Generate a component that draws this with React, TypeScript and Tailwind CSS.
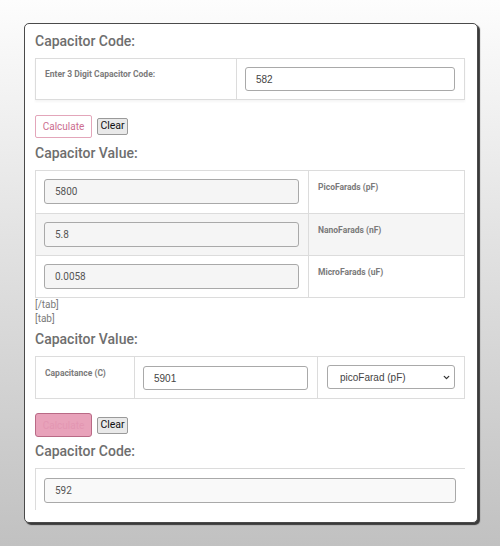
import { ChevronDown } from "lucide-react";

const label = "block text-[8.5px] font-bold text-[#7a7a7a] leading-[12px]";
const heading =
  "text-[14px] font-medium leading-[24px] text-[#6e6e6e] font-['Roboto',sans-serif]";
const readonlyInput =
  "h-[25px] w-full rounded-[3px] border border-[#a9a9a9] bg-[#f5f5f5] pl-[10px] flex items-center text-[10px] text-[#555]";

function ClearButton() {
  return (
    <button className="h-[17px] w-[31px] rounded-[2px] border border-[#9a9a9a] bg-[#e9e9e9] text-[10.5px] text-[#111] leading-none">
      Clear
    </button>
  );
}

export default function App() {
  return (
    <div className="h-[546px] w-[500px] overflow-hidden bg-gradient-to-b from-[#fdfdfd] to-[#c1c1c1] pl-[24px] pt-[23px] font-['Roboto',sans-serif]">
      <div className="h-[500px] w-[454px] overflow-hidden rounded-[5px] border border-[#4a4a4a] bg-white pl-[10px] pt-[5px] shadow-[2px_2px_1px_#3a3a3a]">
        {/* Code to value */}
        <h2 className={heading}>Capacitor Code:</h2>
        <div className="mt-[5px] flex h-[42px] w-[430px] border border-[#dcdcdc] shadow-[0_2px_2px_rgba(0,0,0,0.04)]">
          <div className="w-[201px] border-r border-[#dcdcdc] pl-[9px] pt-[9px]">
            <span className={label}>Enter 3 Digit Capacitor Code:</span>
          </div>
          <div className="flex-1 pl-[8px] pr-[9px] pt-[8px]">
            <div className="flex h-[24px] items-center rounded-[3px] border border-[#a9a9a9] bg-white pl-[10px] font-['Liberation_Sans',sans-serif] text-[10px] text-[#444]">
              582
            </div>
          </div>
        </div>

        <div className="mt-[15px] flex items-center gap-[5px]">
          <button className="h-[23px] w-[57px] rounded-[2px] border border-[#e3a6ba] bg-white text-[10px] text-[#cc6d90]">
            Calculate
          </button>
          <ClearButton />
        </div>

        <h2 className={`${heading} mt-[3px]`}>Capacitor Value:</h2>
        <div className="mt-[5px] w-[430px] border border-[#dcdcdc]">
          {[
            { v: "5800", u: "PicoFarads (pF)", bg: "bg-white" },
            { v: "5.8", u: "NanoFarads (nF)", bg: "bg-[#f5f5f5]" },
            { v: "0.0058", u: "MicroFarads (uF)", bg: "bg-white" },
          ].map((row, i) => (
            <div
              key={row.u}
              className={`flex h-[42px] ${row.bg} ${i > 0 ? "border-t border-[#dcdcdc]" : ""}`}
            >
              <div className="w-[273px] border-r border-[#dcdcdc] pl-[8px] pr-[9px] pt-[8px]">
                <div className={readonlyInput}>{row.v}</div>
              </div>
              <div className="pl-[9px] pt-[10px]">
                <span className={label}>{row.u}</span>
              </div>
            </div>
          ))}
        </div>
        <p className="text-[10px] leading-[14px] text-[#7a7a7a]">[/tab]</p>
        <p className="text-[10px] leading-[14px] text-[#7a7a7a]">[tab]</p>

        {/* Value to code */}
        <h2 className={`${heading} mt-[1px]`}>Capacitor Value:</h2>
        <div className="mt-[5px] flex h-[43px] w-[430px] border border-[#dcdcdc]">
          <div className="w-[99px] border-r border-[#dcdcdc] pl-[9px] pt-[10px]">
            <span className={label}>Capacitance (C)</span>
          </div>
          <div className="w-[183px] border-r border-[#dcdcdc] pl-[8px] pr-[9px] pt-[9px]">
            <div className="flex h-[24px] items-center rounded-[3px] border border-[#a9a9a9] bg-white pl-[10px] font-['Liberation_Sans',sans-serif] text-[10px] text-[#444]">
              5901
            </div>
          </div>
          <div className="flex-1 pl-[9px] pr-[9px] pt-[8px]">
            <div className="flex h-[24px] items-center justify-between rounded-[3px] border border-[#a9a9a9] bg-white pl-[12px] pr-[3px] font-['Liberation_Sans',sans-serif] text-[10px] text-[#444]">
              picoFarad (pF)
              <ChevronDown size={9} strokeWidth={3.5} className="text-[#333]" />
            </div>
          </div>
        </div>

        <div className="mt-[14px] flex items-center gap-[5px]">
          <button className="h-[24px] w-[57px] rounded-[3px] border border-[#b96a86] bg-[#e8a2ba] text-[10px] text-[#e396b2]">
            Calculate
          </button>
          <ClearButton />
        </div>

        <h2 className={`${heading} mt-[2px]`}>Capacitor Code:</h2>
        <div className="mt-[5px] h-[42px] w-[430px] border-l border-t border-[#dcdcdc] pl-[8px] pr-[9px] pt-[9px]">
          <div className="h-[25px] w-full rounded-[3px] border border-[#a9a9a9] bg-[#f9f9f9] pl-[10px] flex items-center text-[10px] text-[#555]">
            592
          </div>
        </div>
      </div>
    </div>
  );
}
